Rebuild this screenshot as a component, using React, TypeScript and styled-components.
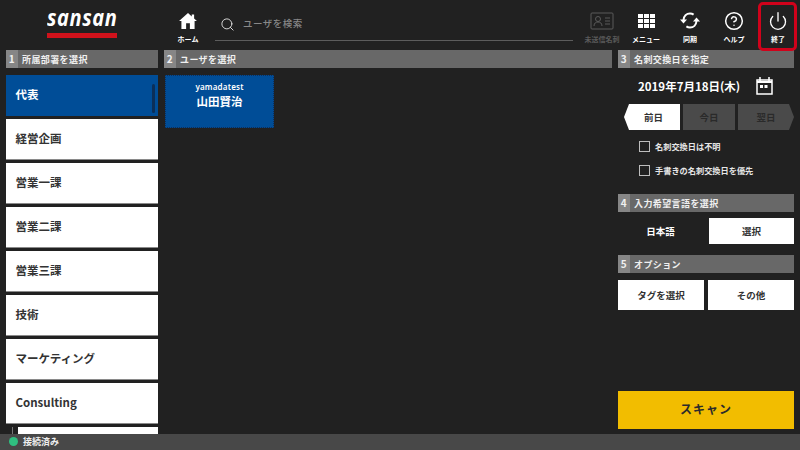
import styled, { createGlobalStyle } from "styled-components";
import { Search, CircleHelp, Power } from "lucide-react";

const departments = ["代表", "経営企画", "営業一課", "営業二課", "営業三課", "技術", "マーケティング", "Consulting"];

const Global = createGlobalStyle`
  html, body { margin: 0; padding: 0; background: #212121; }
  body { font-family: "Noto Sans CJK JP", "Liberation Sans", sans-serif; width: 800px; height: 450px; overflow: hidden; }
  * { box-sizing: border-box; }
`;

const Page = styled.div`
  width: 800px;
  height: 450px;
  display: flex;
  flex-direction: column;
  background: #212121;
  color: #fff;
`;

const Header = styled.header`
  height: 50px;
  display: flex;
  flex-shrink: 0;
`;

const LogoBox = styled.div`
  width: 166px;
  padding: 8px 0 0 47px;
`;

const LogoText = styled.div`
  width: 70px;
  font: italic 700 20px/20px "Open Sans", sans-serif;
  letter-spacing: 0.6px;
  text-align: center;
  transform: scaleY(1.12);
`;

const LogoBar = styled.div`
  width: 70px;
  height: 5px;
  margin-top: 5px;
  background: #d0121b;
`;

const NavItem = styled.div<{ $dim?: boolean }>`
  width: 44px;
  height: 50px;
  display: flex;
  flex-direction: column;
  align-items: center;
  padding-top: 10px;
  color: ${p => (p.$dim ? "#5a5a5a" : "#fff")};
  flex-shrink: 0;
`;

const NavIcon = styled.div`
  height: 21px;
  display: flex;
  align-items: center;
  justify-content: center;
`;

const NavLabel = styled.div`
  margin-top: 4px;
  font-size: 7px;
  line-height: 9px;
  font-weight: 700;
  white-space: nowrap;
`;

const SearchBox = styled.div`
  width: 358px;
  height: 41px;
  margin-left: 5px;
  display: flex;
  align-items: center;
  gap: 8px;
  padding: 9px 0 0 5px;
  border-bottom: 1px solid #5c5c5c;
  color: #e0e0e0;
`;

const SearchText = styled.span`
  font-size: 9.5px;
  font-weight: 500;
  letter-spacing: 0.5px;
  color: #888;
  margin-top: -4px;
`;

const Spacer = styled.div`
  flex: 1;
`;

const ExitItem = styled(NavItem)`
  position: relative;
  &::after {
    content: "";
    box-sizing: border-box;
    position: absolute;
    left: 2px;
    top: 2px;
    width: 39px;
    height: 49px;
    border: 3px solid #d0021b;
    border-radius: 5px;
    z-index: 2;
  }
`;

const Columns = styled.div`
  flex: 1;
  min-height: 0;
  display: grid;
  grid-template-columns: 152px 448px 176px;
  column-gap: 6px;
  padding: 0 6px;
`;

const Column = styled.div`
  display: flex;
  flex-direction: column;
  min-height: 0;
  overflow: hidden;
`;

const SectionBar = styled.div`
  height: 18px;
  display: flex;
  align-items: center;
  flex-shrink: 0;
  background: #686868;
  font-size: 9px;
  font-weight: 700;
  letter-spacing: 0.4px;
  color: #f0f0f0;
`;

const SectionNum = styled.span`
  width: 12px;
  height: 18px;
  margin-right: 4px;
  background: #868686;
  text-align: center;
  font-size: 10px;
  line-height: 18px;
`;

const DeptList = styled.div`
  flex: 1;
  min-height: 0;
  margin-top: 7px;
  display: flex;
  flex-direction: column;
  gap: 3px;
  overflow: hidden;
`;

const DeptItem = styled.div<{ $active?: boolean }>`
  position: relative;
  height: 41px;
  flex-shrink: 0;
  display: flex;
  align-items: center;
  padding: 0 0 3px 9.5px;
  background: ${p => (p.$active ? "#004d97" : "#fff")};
  color: ${p => (p.$active ? "#fff" : "#333")};
  font-size: 11.5px;
  font-weight: 700;
  border-bottom: 1px solid ${p => (p.$active ? "#004d97" : "#8a8a8a")};
`;

const ScrollThumb = styled.div`
  position: absolute;
  right: 3px;
  top: 9px;
  width: 3px;
  height: 29px;
  border-radius: 2px;
  background: #0b2f59;
`;

const NestedRow = styled.div`
  height: 30px;
  flex-shrink: 0;
  display: flex;
  padding-left: 6px;
`;

const NestedLine = styled.div`
  width: 1px;
  height: 100%;
  margin-right: 5px;
  background: #777;
`;

const NestedItem = styled.div`
  flex: 1;
  background: #fff;
`;

const UserCard = styled.div`
  width: 109px;
  height: 53px;
  margin: 7px 0 0 1px;
  background: #004d97;
  border: 1px dotted #0d2f5c;
  display: flex;
  flex-direction: column;
  align-items: center;
  padding-top: 5px;
`;

const UserId = styled.div`
  font: 600 8px/12px "Noto Sans", sans-serif;
  letter-spacing: 0.2px;
`;

const UserName = styled.div`
  font-size: 11.5px;
  line-height: 17px;
  font-weight: 700;
`;

const DateRow = styled.div`
  height: 35px;
  display: flex;
  align-items: center;
  padding-left: 20px;
  flex-shrink: 0;
`;

const DateText = styled.div`
  width: 118px;
  font-size: 11.5px;
  font-weight: 700;
  white-space: nowrap;
`;

const DayButtons = styled.div`
  display: flex;
  gap: 3px;
  margin: 1px 0 0 6px;
  flex-shrink: 0;
`;

const DayButton = styled.div<{ $on?: boolean; $shape?: "left" | "right" }>`
  width: ${p => (p.$shape ? 56 : 52)}px;
  height: 26px;
  display: flex;
  align-items: center;
  justify-content: center;
  padding-left: ${p => (p.$shape === "left" ? 3 : 0)}px;
  background: ${p => (p.$on ? "#fff" : "#4a4a4a")};
  color: ${p => (p.$on ? "#333" : "#2a2a2a")};
  font-size: 9.5px;
  font-weight: 700;
  clip-path: ${p =>
    p.$shape === "left"
      ? "polygon(5px 0, 100% 0, 100% 100%, 5px 100%, 0 50%)"
      : p.$shape === "right"
      ? "polygon(0 0, calc(100% - 5px) 0, 100% 50%, calc(100% - 5px) 100%, 0 100%)"
      : "none"};
`;

const CheckList = styled.div`
  margin: 10px 0 0 21px;
  display: flex;
  flex-direction: column;
  gap: 12px;
  flex-shrink: 0;
`;

const CheckRow = styled.div`
  display: flex;
  align-items: center;
  gap: 5px;
  height: 12px;
  font-size: 8.2px;
  font-weight: 700;
  color: #e6e6e6;
`;

const CheckBox = styled.span`
  width: 11px;
  height: 11px;
  border: 1px solid #bdbdbd;
`;

const LangRow = styled.div`
  display: flex;
  align-items: center;
  margin-top: 6px;
  flex-shrink: 0;
`;

const LangName = styled.div`
  width: 85px;
  margin-right: 6px;
  padding-bottom: 1px;
  text-align: center;
  font-size: 9.5px;
  font-weight: 700;
`;

const WhiteButton = styled.div<{ $w: number; $h: number }>`
  width: ${p => p.$w}px;
  height: ${p => p.$h}px;
  padding-bottom: 1px;
  display: flex;
  align-items: center;
  justify-content: center;
  background: #fff;
  color: #333;
  font-size: 9.5px;
  font-weight: 700;
`;

const OptionRow = styled.div`
  display: flex;
  gap: 4px;
  margin-top: 7px;
  flex-shrink: 0;
`;

const ScanButton = styled.div`
  margin-top: auto;
  margin-bottom: 5px;
  height: 38px;
  padding-bottom: 3px;
  flex-shrink: 0;
  display: flex;
  align-items: center;
  justify-content: center;
  background: #f2bd00;
  color: #2b2b2b;
  font-size: 12px;
  font-weight: 700;
  letter-spacing: 1px;
`;

const Gap = styled.div<{ $h: number }>`
  height: ${p => p.$h}px;
  flex-shrink: 0;
`;

const StatusBar = styled.footer`
  height: 16px;
  flex-shrink: 0;
  display: flex;
  align-items: center;
  gap: 5px;
  padding: 0 0 1px 9px;
  background: #484848;
  font-size: 9px;
  font-weight: 700;
  color: #eee;
`;

const StatusDot = styled.span`
  width: 9px;
  height: 9px;
  border-radius: 50%;
  background: #2fbf80;
`;

const HomeIcon = () => (
  <svg width="18" height="16" viewBox="0 0 19 17" fill="currentColor">
    <path d="M9.5 0 L13.5 3.6 V1.5 H16 V5.9 L19 8.6 H16.5 V17 H11.5 V11 H7.5 V17 H2.5 V8.6 H0 Z" />
  </svg>
);

const CardIcon = () => (
  <svg width="24" height="18" viewBox="0 0 24 18" fill="none" stroke="currentColor" strokeWidth="1">
    <rect x="1" y="1" width="22" height="16" rx="1" />
    <circle cx="8" cy="7" r="2.5" />
    <path d="M4 14c0-3 2-4 4-4s4 1 4 4M15 6h5M15 9h5M15 12h5" />
  </svg>
);

const GridIcon = () => (
  <svg width="17" height="14" viewBox="0 0 17 14" fill="currentColor">
    {[0, 6, 12].map(x =>
      [0, 5, 10].map(y => <rect key={`${x}-${y}`} x={x} y={y} width="5" height="4" />)
    )}
  </svg>
);

const SyncIcon = () => (
  <svg width="20" height="17" viewBox="0 0 20 17" fill="none" stroke="currentColor" strokeWidth="2">
    <path d="M3.5 8C3.8 4 6.5 1.5 10 1.5c1.6 0 2.6.4 3.6 1.1" />
    <path d="M16.5 9c-.3 4-3 6.5-6.5 6.5-1.6 0-2.6-.4-3.6-1.1" />
    <path d="M0 7.5h7L3.5 11.5Z M13 9.5h7L16.5 5.5Z" fill="currentColor" stroke="none" />
  </svg>
);

const CalendarIcon = () => (
  <svg width="17" height="18" viewBox="0 0 17 18" fill="none" stroke="currentColor">
    <rect x="1" y="3" width="15" height="14" strokeWidth="1.5" />
    <path d="M4 0v4M13 0v4" strokeWidth="1.5" />
    <path d="M1 5h15" strokeWidth="2" />
    <rect x="4" y="8" width="3" height="3" fill="currentColor" stroke="none" />
    <rect x="8.5" y="8" width="3" height="3" fill="currentColor" stroke="none" />
  </svg>
);

export default function App() {
  return (
    <Page>
      <Global />
      <Header>
        <LogoBox>
          <LogoText>sansan</LogoText>
          <LogoBar />
        </LogoBox>
        <NavItem>
          <NavIcon><HomeIcon /></NavIcon>
          <NavLabel>ホーム</NavLabel>
        </NavItem>
        <SearchBox>
          <Search size={15} strokeWidth={1.5} />
          <SearchText>ユーザを検索</SearchText>
        </SearchBox>
        <Spacer />
        <NavItem $dim>
          <NavIcon><CardIcon /></NavIcon>
          <NavLabel>未送信名刺</NavLabel>
        </NavItem>
        <NavItem>
          <NavIcon><GridIcon /></NavIcon>
          <NavLabel>メニュー</NavLabel>
        </NavItem>
        <NavItem>
          <NavIcon><SyncIcon /></NavIcon>
          <NavLabel>同期</NavLabel>
        </NavItem>
        <NavItem>
          <NavIcon><CircleHelp size={20} strokeWidth={1.8} /></NavIcon>
          <NavLabel>ヘルプ</NavLabel>
        </NavItem>
        <ExitItem>
          <NavIcon><Power size={20} strokeWidth={1.6} /></NavIcon>
          <NavLabel>終了</NavLabel>
        </ExitItem>
      </Header>
      <Columns>
        <Column>
          <SectionBar><SectionNum>1</SectionNum>所属部署を選択</SectionBar>
          <DeptList>
            {departments.map((name, i) => (
              <DeptItem key={name} $active={i === 0}>
                {name}
                {i === 0 && <ScrollThumb />}
              </DeptItem>
            ))}
            <NestedRow>
              <NestedLine />
              <NestedItem />
            </NestedRow>
          </DeptList>
        </Column>
        <Column>
          <SectionBar><SectionNum>2</SectionNum>ユーザを選択</SectionBar>
          <UserCard>
            <UserId>yamadatest</UserId>
            <UserName>山田賢治</UserName>
          </UserCard>
        </Column>
        <Column>
          <SectionBar><SectionNum>3</SectionNum>名刺交換日を指定</SectionBar>
          <DateRow>
            <DateText>2019年7月18日(木)</DateText>
            <CalendarIcon />
          </DateRow>
          <DayButtons>
            <DayButton $on $shape="left">前日</DayButton>
            <DayButton>今日</DayButton>
            <DayButton $shape="right">翌日</DayButton>
          </DayButtons>
          <CheckList>
            <CheckRow><CheckBox />名刺交換日は不明</CheckRow>
            <CheckRow><CheckBox />手書きの名刺交換日を優先</CheckRow>
          </CheckList>
          <Gap $h={18} />
          <SectionBar><SectionNum>4</SectionNum>入力希望言語を選択</SectionBar>
          <LangRow>
            <LangName>日本語</LangName>
            <WhiteButton $w={85} $h={26}>選択</WhiteButton>
          </LangRow>
          <Gap $h={11} />
          <SectionBar><SectionNum>5</SectionNum>オプション</SectionBar>
          <OptionRow>
            <WhiteButton $w={86} $h={30}>タグを選択</WhiteButton>
            <WhiteButton $w={86} $h={30}>その他</WhiteButton>
          </OptionRow>
          <ScanButton>スキャン</ScanButton>
        </Column>
      </Columns>
      <StatusBar>
        <StatusDot />
        接続済み
      </StatusBar>
    </Page>
  );
}
